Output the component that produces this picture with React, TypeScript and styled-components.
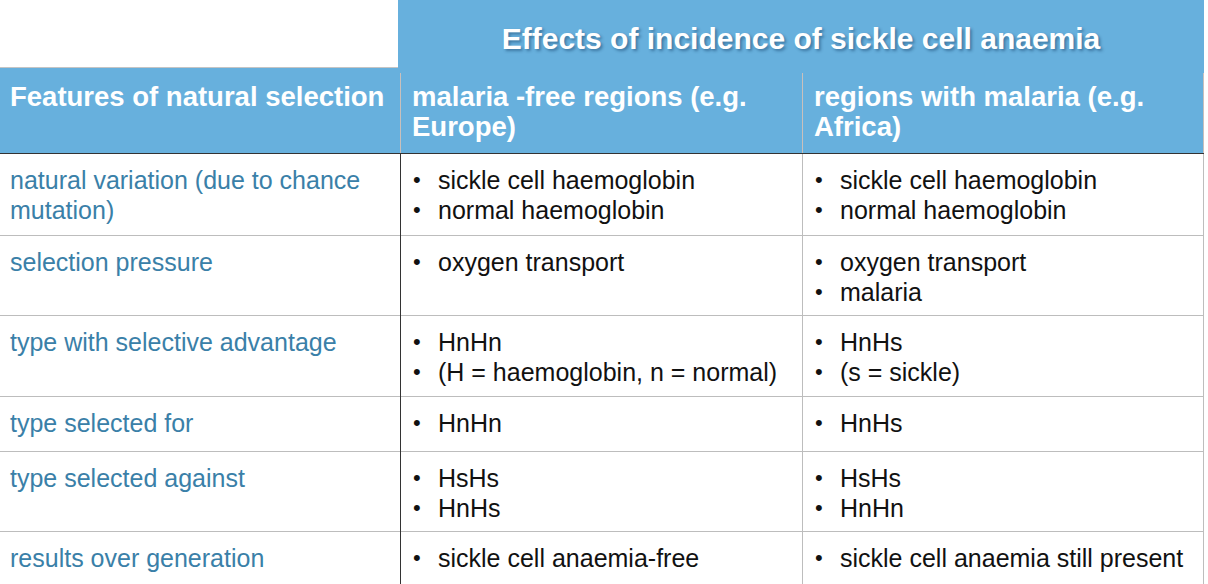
import React from "react";
import styled, { createGlobalStyle } from "styled-components";

const BLUE = "#67b0dd";

const Global = createGlobalStyle`
  html, body { margin: 0; padding: 0; background: #ffffff; }
  body { font-family: "Liberation Sans", Arial, Helvetica, sans-serif; }
  ul { margin: 0; padding: 0; list-style: none; }
`;

const Page = styled.div`
  width: 1208px;
  height: 584px;
  overflow: hidden;
  background: #fff;
`;

const TopBand = styled.div`
  display: flex;
  height: 68px;
`;

const Blank = styled.div`
  flex: 0 0 398px;
  height: 67px;
  border-bottom: 1px solid #c4c4c4;
`;

const TitleBox = styled.div`
  flex: 0 0 806px;
  height: 68px;
  box-sizing: border-box;
  background: ${BLUE};
  padding-top: 21px;
  text-align: center;
`;

const Title = styled.h1`
  margin: 0;
  font-size: 30px;
  line-height: 36px;
  font-weight: 700;
  color: #fff;
  text-shadow: 2px 2px 3px rgba(10, 50, 90, 0.45);
`;

const HeaderRow = styled.div`
  display: grid;
  grid-template-columns: 400px 402px 402px;
  width: 1204px;
  box-sizing: border-box;
  padding-top: 5px;
  height: 86px;
  background: ${BLUE};
  border-bottom: 1px solid #333;
`;

const HeaderCell = styled.div<{ $first?: boolean; $last?: boolean }>`
  box-sizing: border-box;
  padding: 9px 8px 0 ${(p) => (p.$first ? "10px" : "11px")};
  border-left: ${(p) => (p.$first ? "none" : "1px solid #c9c0bc")};
  border-right: ${(p) => (p.$last ? "1px solid #c9c0bc" : "none")};
  font-size: 27.5px;
  line-height: 30px;
  font-weight: 700;
  color: #fff;
`;

const Row = styled.div<{ $h?: number; $last?: boolean }>`
  display: grid;
  grid-template-columns: 400px 402px 402px;
  width: 1204px;
  box-sizing: border-box;
  height: ${(p) => (p.$h ? `${p.$h}px` : "auto")};
  border-bottom: ${(p) => (p.$last ? "none" : "1px solid #bdbdbd")};
`;

const FeatureCell = styled.div`
  box-sizing: border-box;
  padding: 11px 10px 0 10px;
  font-size: 25px;
  line-height: 30px;
  color: #3a80a8;
`;

const ValueCell = styled.div<{ $divider: "dark" | "light"; $last?: boolean }>`
  box-sizing: border-box;
  padding: 11px 6px 14px 11px;
  border-left: 1px solid ${(p) => (p.$divider === "dark" ? "#333" : "#bdbdbd")};
  border-right: ${(p) => (p.$last ? "1px solid #bdbdbd" : "none")};
  font-size: 25px;
  line-height: 30px;
  color: #111;
`;

const Item = styled.li`
  display: flex;
`;

const Bullet = styled.span`
  flex: 0 0 26px;
  text-align: left;
  padding-left: 1px;
  box-sizing: border-box;
  font-size: 22px;
`;

type RowData = {
  feature: string;
  europe: string[];
  africa: string[];
  h?: number;
};

const rows: RowData[] = [
  {
    feature: "natural variation (due to chance mutation)",
    europe: ["sickle cell haemoglobin", "normal haemoglobin"],
    africa: ["sickle cell haemoglobin", "normal haemoglobin"],
    h: 82,
  },
  {
    feature: "selection pressure",
    europe: ["oxygen transport"],
    africa: ["oxygen transport", "malaria"],
    h: 80,
  },
  {
    feature: "type with selective advantage",
    europe: ["HnHn", "(H = haemoglobin, n = normal)"],
    africa: ["HnHs", "(s = sickle)"],
    h: 81,
  },
  {
    feature: "type selected for",
    europe: ["HnHn"],
    africa: ["HnHs"],
    h: 55,
  },
  {
    feature: "type selected against",
    europe: ["HsHs", "HnHs"],
    africa: ["HsHs", "HnHn"],
    h: 80,
  },
  {
    feature: "results over generation",
    europe: ["sickle cell anaemia-free"],
    africa: ["sickle cell anaemia still present"],
  },
];

const List = ({ items }: { items: string[] }) => (
  <ul>
    {items.map((t) => (
      <Item key={t}>
        <Bullet>•</Bullet>
        <span>{t}</span>
      </Item>
    ))}
  </ul>
);

export default function App() {
  return (
    <>
      <Global />
      <Page>
        <TopBand>
          <Blank />
          <TitleBox>
            <Title>Effects of incidence of sickle cell anaemia</Title>
          </TitleBox>
        </TopBand>
        <HeaderRow>
          <HeaderCell $first>Features of natural selection</HeaderCell>
          <HeaderCell>malaria -free regions (e.g. Europe)</HeaderCell>
          <HeaderCell $last>regions with malaria (e.g. Africa)</HeaderCell>
        </HeaderRow>
        {rows.map((r, i) => (
          <Row key={r.feature} $h={r.h} $last={i === rows.length - 1}>
            <FeatureCell>{r.feature}</FeatureCell>
            <ValueCell $divider="dark">
              <List items={r.europe} />
            </ValueCell>
            <ValueCell $divider="light" $last>
              <List items={r.africa} />
            </ValueCell>
          </Row>
        ))}
      </Page>
    </>
  );
}
